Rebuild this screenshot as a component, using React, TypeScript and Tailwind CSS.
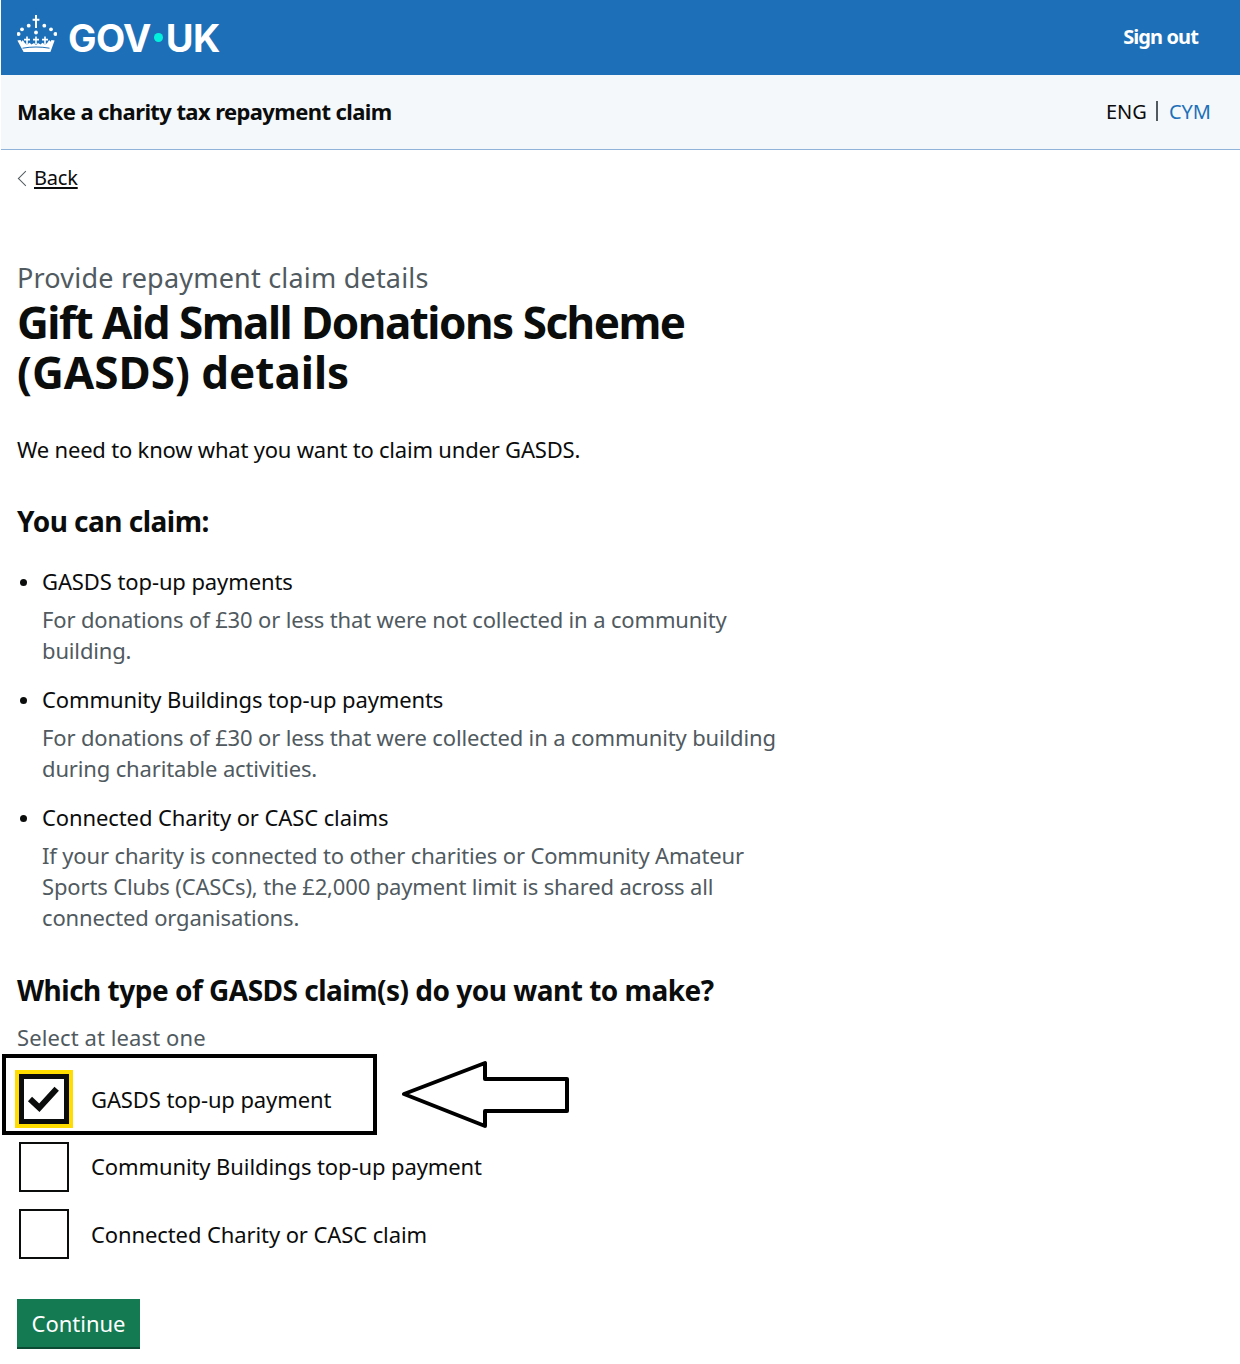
const Crown = () => (
  <svg viewBox="17 14 40 39" className="w-[40px] h-[39px] -mt-[8px]" fill="white">
    <path d="M35 15H37V18.8H39.4V20.8H37V28H35V20.8H32.6V18.8H35Z" />
    <circle cx="28.7" cy="25.7" r="1.9" />
    <circle cx="44.3" cy="25.7" r="1.9" />
    <circle cx="22" cy="29.3" r="1.9" />
    <circle cx="51" cy="29.3" r="1.9" />
    <circle cx="18.6" cy="34" r="1.9" />
    <circle cx="55.4" cy="34" r="1.9" />
    <circle cx="36" cy="32.5" r="1.9" />
    <path d="M26.2 36.5H27.8V38.8H30V40.4H27.8V44H26.2V40.4H24V38.8H26.2Z" />
    <path d="M35.2 36.5H36.8V38.8H39V40.4H36.8V44H35.2V40.4H33V38.8H35.2Z" />
    <path d="M44.2 36.5H45.8V38.8H48V40.4H45.8V44H44.2V40.4H42V38.8H44.2Z" />
    <path d="M17.4 40.5L20.5 40L21.6 41.8L22.8 40L25 43.2L27 44.6L29.6 42.8L31.5 44.6L34 43L36 45L38 43L40.5 44.6L42.4 42.8L45 44.6L47 43.2L49.2 40L50.4 41.8L51.5 40L54.6 40.5L50.4 52H23.6Z" />
    <path d="M22.5 48.2C31 46.6 41 46.6 49.5 48.2" stroke="#1d70b8" strokeWidth="1" fill="none" />
  </svg>
);

const items = [
  {
    title: "GASDS top-up payments",
    text: "For donations of £30 or less that were not collected in a community building.",
  },
  {
    title: "Community Buildings top-up payments",
    text: "For donations of £30 or less that were collected in a community building during charitable activities.",
  },
  {
    title: "Connected Charity or CASC claims",
    text: "If your charity is connected to other charities or Community Amateur Sports Clubs (CASCs), the £2,000 payment limit is shared across all connected organisations.",
  },
];

const options = [
  { label: "GASDS top-up payment", checked: true },
  { label: "Community Buildings top-up payment", checked: false },
  { label: "Connected Charity or CASC claim", checked: false },
];

export default function App() {
  return (
    <div className="relative w-[1240px] h-[1364px] bg-white text-[#0b0c0c] font-['Noto_Sans',sans-serif] text-[22px] leading-[31px] overflow-hidden">
      <header className="ml-px h-[75px] bg-[#1d70b8] flex items-center justify-between pl-[16px] pr-[42px] text-white">
        <div className="flex items-center">
          <Crown />
          <span className="ml-[11px] text-[38px] leading-[40px] font-bold font-['Inter',sans-serif] tracking-[-0.6px] flex items-center">
            GOV<span className="w-[9px] h-[9px] mx-[3px] rounded-full bg-[#00ffe0] opacity-90"></span>UK
          </span>
        </div>
        <a className="font-bold text-[20px] tracking-[-0.9px] pb-[2px]">Sign out</a>
      </header>

      <div className="ml-px h-[75px] bg-[#f4f8fb] border-b border-[#8fb3d9] flex items-center justify-between pl-[16px] pr-[29px] pb-[2px]">
        <span className="font-bold text-[22px] tracking-[-0.6px]">Make a charity tax repayment claim</span>
        <div className="flex items-center text-[20px]">
          <span>ENG</span>
          <span className="ml-[9px] mr-[11px] w-[2px] h-[20px] bg-[#505a5f]"></span>
          <a className="text-[#1d70b8]">CYM</a>
        </div>
      </div>

      <main className="pl-[17px] w-[790px]">
        <a className="mt-[14px] flex items-center text-[20px] leading-[28px] tracking-[-0.2px]">
          <span className="w-[11px] h-[11px] ml-[3px] mr-[3px] border-l border-b border-[#505a5f] rotate-45"></span>
          <span className="underline underline-offset-2">Back</span>
        </a>

        <p className="mt-[70px] text-[27px] leading-[32px] text-[#505a5f] tracking-[0.2px]">Provide repayment claim details</p>
        <h1 className="mt-[3px] text-[44px] leading-[50px] font-bold tracking-[-1.5px] w-[720px]">
          Gift Aid Small Donations Scheme <span className="tracking-[0px]">(GASDS) details</span>
        </h1>

        <p className="mt-[37px] tracking-[-0.2px]">We need to know what you want to claim under GASDS.</p>

        <h2 className="mt-[38px] text-[28px] leading-[36px] font-bold tracking-[-0.5px]">You can claim:</h2>

        <ul className="mt-[27px] flex flex-col gap-[18px]">
          {items.map((item) => (
            <li key={item.title} className="relative pl-[25px]">
              <span className="absolute left-[3px] top-[13px] w-[7px] h-[7px] rounded-full bg-[#0b0c0c]"></span>
              <div className="mb-[7px] tracking-[-0.1px]">{item.title}</div>
              <div className="text-[#505a5f] tracking-[-0.15px]">{item.text}</div>
            </li>
          ))}
        </ul>

        <h2 className="mt-[39px] text-[28px] leading-[36px] font-bold tracking-[-0.5px]">
          Which type of GASDS claim(s) do you want to make?
        </h2>

        <p className="mt-[14px] text-[#505a5f] tracking-[0.1px]">Select at least one</p>

        <div className="mt-[21px] flex flex-col gap-[17.5px] pl-[2px]">
          {options.map((option) => (
            <label key={option.label} className="flex items-center gap-[22px]">
              {option.checked ? (
                <span className="w-[50px] h-[50px] border-[5px] border-[#0b0c0c] outline-[4px] outline-[#ffdd00] bg-white">
                  <svg viewBox="0 0 40 40" className="w-[40px] h-[40px]" fill="none" stroke="#0b0c0c" strokeWidth="6">
                    <path d="M6 20L15.3 28.7L32.7 9.7" />
                  </svg>
                </span>
              ) : (
                <span className="w-[50px] h-[50px] border-2 border-[#0b0c0c]"></span>
              )}
              <span className="tracking-[-0.1px]">{option.label}</span>
            </label>
          ))}
        </div>

        <button className="mt-[40px] w-[123px] h-[50px] bg-[#137a52] border-b-[2px] border-[#0b4a33] text-white text-[22px]">
          Continue
        </button>
      </main>

      {/* annotation drawn over the screenshot */}
      <div className="absolute left-[2px] top-[1054px] w-[375px] h-[81px] border-[4px] border-black"></div>
      <svg className="absolute left-[400px] top-[1058px]" width="172" height="74" viewBox="0 0 172 74" fill="white" stroke="black" strokeWidth="4" strokeLinejoin="round">
        <path d="M4 36L85 5V21H167V53H85V68Z" />
      </svg>
    </div>
  );
}
